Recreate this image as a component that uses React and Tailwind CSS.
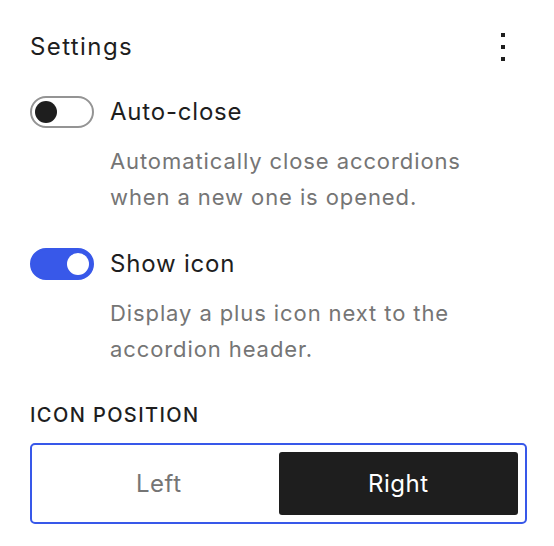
import { useState } from "react";

const Toggle = ({ on, onClick }) => (
  <button
    onClick={onClick}
    className={`relative w-[64px] h-[32px] rounded-full shrink-0 border-2 ${
      on ? "bg-[#3858e9] border-[#3858e9]" : "bg-white border-[#949494]"
    }`}
  >
    <span
      className={`absolute top-[3px] w-[22px] h-[22px] rounded-full ${
        on ? "left-[35px] bg-white" : "left-[3px] bg-[#1e1e1e]"
      }`}
    />
  </button>
);

export default function App() {
  const [autoClose, setAutoClose] = useState(false);
  const [showIcon, setShowIcon] = useState(true);
  const [pos, setPos] = useState("right");

  return (
    <div
      className="w-[554px] h-[546px] bg-white text-[#1e1e1e] px-[30px] pt-[30px]"
      style={{ fontFamily: "Inter, 'Noto Sans', sans-serif" }}
    >
      <div className="flex items-center justify-between h-[34px]">
        <h2 className="text-[24px] font-normal tracking-[1.4px]">Settings</h2>
        <button className="w-[4px] h-[28px] flex flex-col items-center justify-between mr-[19px]">
          <span className="w-[4px] h-[4px] bg-[#1e1e1e]" />
          <span className="w-[4px] h-[4px] bg-[#1e1e1e]" />
          <span className="w-[4px] h-[4px] bg-[#1e1e1e]" />
        </button>
      </div>

      <div className="mt-[30px]">
        <div className="flex items-center gap-[16px]">
          <Toggle on={autoClose} onClick={() => setAutoClose(!autoClose)} />
          <span className="text-[24px] tracking-[0.8px]">Auto-close</span>
        </div>
        <p className="ml-[80px] mt-[13px] text-[22px] leading-[36px] tracking-[0.9px] text-[#757575]">
          Automatically close accordions
          <br />
          when a new one is opened.
        </p>
      </div>

      <div className="mt-[31px]">
        <div className="flex items-center gap-[16px]">
          <Toggle on={showIcon} onClick={() => setShowIcon(!showIcon)} />
          <span className="text-[24px] tracking-[0.8px]">Show icon</span>
        </div>
        <p className="ml-[80px] mt-[13px] text-[22px] leading-[36px] tracking-[0.9px] text-[#757575]">
          Display a plus icon next to the
          <br />
          accordion header.
        </p>
      </div>

      <div className="mt-[33px] text-[20px] font-medium uppercase tracking-[1.4px]">Icon position</div>

      <div className="mt-[13px] w-[497px] h-[81px] border-2 border-[#3858e9] rounded-[5px] p-[7px] flex">
        {["left", "right"].map((p) => (
          <button
            key={p}
            onClick={() => setPos(p)}
            className={`flex-1 rounded-[3px] text-[24px] capitalize tracking-[0.5px] ${
              pos === p ? "bg-[#1e1e1e] text-white" : "text-[#757575]"
            }`}
          >
            {p}
          </button>
        ))}
      </div>
    </div>
  );
}
